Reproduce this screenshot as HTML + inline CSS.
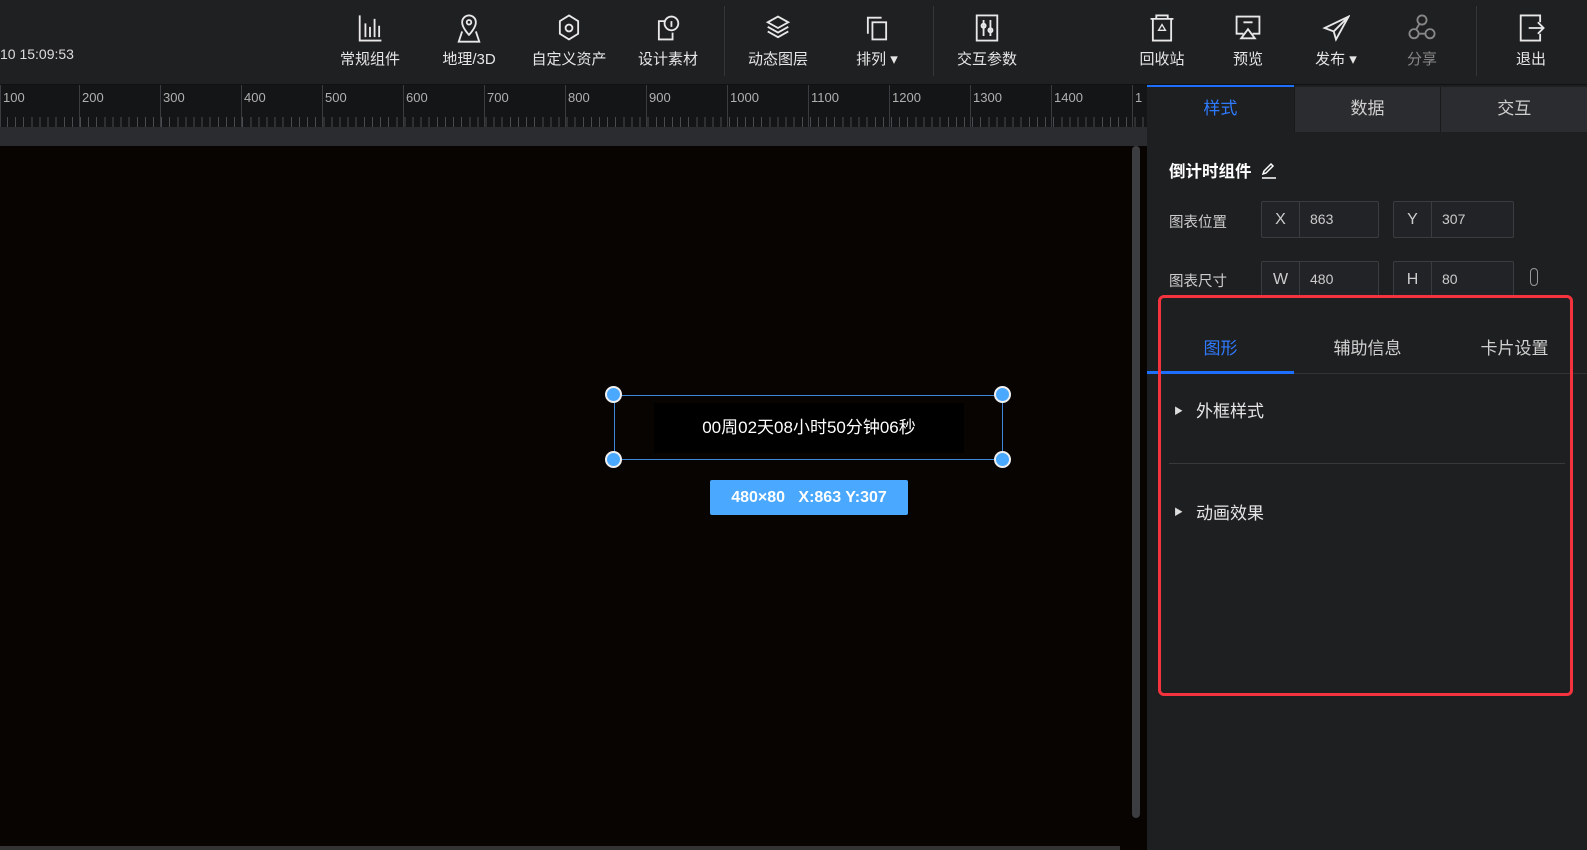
<!DOCTYPE html>
<html><head><meta charset="utf-8"><style>
*{margin:0;padding:0;box-sizing:border-box}
body{width:1587px;height:850px;overflow:hidden;background:#080402;font-family:"Liberation Sans","Noto Sans CJK SC",sans-serif;color:#ddd;position:relative}
.abs{position:absolute}
#hdr{left:0;top:0;width:1587px;height:85px;background:#1f2022;border-bottom:1px solid #111}
.tb{position:absolute;top:0;height:85px;width:90px;margin-left:-45px;text-align:center}
.tb svg{position:absolute;left:31px;top:12px;width:28px;height:32px}
.tb span{position:absolute;left:0;right:0;top:48px;font-size:15px;color:#e6e6e6;white-space:nowrap}
.sep{position:absolute;top:6px;width:1px;height:70px;background:#34363a}
#ruler{left:0;top:85px;width:1147px;height:42px;background:#141517}
#ticks{left:0;top:117px;width:1147px;height:10px;background:repeating-linear-gradient(90deg,transparent 0,transparent 7px,#4a4b4e 7px,#4a4b4e 8px,transparent 8px,transparent 8.11px)}
.rl{position:absolute;top:0;width:1px;height:42px;background:#3a3c40}
.rt{position:absolute;top:5px;font-size:13px;color:#b0b0b0}
#strip{left:0;top:127px;width:1147px;height:19px;background:#2a2c2f}
#panel{left:1147px;top:85px;width:440px;height:765px;background:#1e1f20}
.tab{position:absolute;top:2px;height:45px;width:146.7px;text-align:center;line-height:44px;font-size:17px;color:#cfcfcf;background:#2b2c2f}
.inp{position:absolute;height:37px;border:1px solid #3a3c40;background:#222326;border-radius:2px;font-size:14px}
.inp b{position:absolute;left:0;top:0;width:38px;height:35px;border-right:1px solid #3a3c40;font-weight:normal;text-align:center;line-height:35px;font-size:16px;color:#ccc}
.inp i{position:absolute;left:48px;top:0;line-height:35px;font-style:normal;color:#ccc}
.lbl{position:absolute;font-size:14.5px;color:#ccc}
.h{position:absolute;width:17px;height:17px;border-radius:50%;background:#4aa8ff;border:2px solid #f0f0f0}
</style></head><body>
<div id="hdr" class="abs">
<div class="abs" style="left:0;top:46px;font-size:14px;color:#ddd">10 15:09:53</div>

<div class="tb" style="left:370px"><svg viewBox="0 0 24 28" fill="none" stroke="#e8e8e8" stroke-width="1.6"><path d="M3 3v22h19M8 10v12M12 13v9M16 6v16M20 12v10"/></svg><span>常规组件</span></div>
<div class="tb" style="left:469px"><svg viewBox="0 0 24 28" fill="none" stroke="#e8e8e8" stroke-width="1.6"><path d="M12 20s-6-6-6-11a6 6 0 0 1 12 0c0 5-6 11-6 11z"/><circle cx="12" cy="9" r="2"/><path d="M6 17l-3 9h18l-3-9"/></svg><span>地理/3D</span></div>
<div class="tb" style="left:569px"><svg viewBox="0 0 24 28" fill="none" stroke="#e8e8e8" stroke-width="1.6"><path d="M12 3l8 5v11l-8 5-8-5V8z"/><circle cx="12" cy="14" r="3"/></svg><span>自定义资产</span></div>
<div class="tb" style="left:668px"><svg viewBox="0 0 24 28" fill="none" stroke="#e8e8e8" stroke-width="1.6"><path d="M10 8H4v16h12v-6"/><circle cx="15" cy="10" r="6"/><path d="M15 8v5"/></svg><span>设计素材</span></div>
<div class="sep" style="left:724px"></div>
<div class="tb" style="left:778px"><svg viewBox="0 0 24 28" fill="none" stroke="#e8e8e8" stroke-width="1.6"><path d="M12 4l9 5-9 5-9-5z"/><path d="M3 13l9 5 9-5M3 17l9 5 9-5"/></svg><span>动态图层</span></div>
<div class="tb" style="left:877px"><svg viewBox="0 0 24 28" fill="none" stroke="#e8e8e8" stroke-width="1.6"><path d="M4 19V5h12"/><rect x="8" y="9" width="12" height="15"/></svg><span>排列 ▾</span></div>
<div class="sep" style="left:933px"></div>
<div class="tb" style="left:987px"><svg viewBox="0 0 24 28" fill="none" stroke="#e8e8e8" stroke-width="1.6"><rect x="3" y="3" width="18" height="22"/><path d="M9 7v14M15 7v14"/><circle cx="9" cy="12" r="1.8"/><circle cx="15" cy="16" r="1.8"/></svg><span>交互参数</span></div>

<div class="tb" style="left:1162px"><svg viewBox="0 0 24 28" fill="none" stroke="#e8e8e8" stroke-width="1.6"><path d="M2 6h20M7 6V3h10v3M4 6v19h16V6"/><path d="M12 11l-3 5h6z" stroke-width="1.2"/></svg><span>回收站</span></div>
<div class="tb" style="left:1248px"><svg viewBox="0 0 24 28" fill="none" stroke="#e8e8e8" stroke-width="1.6"><path d="M8 19H2V4h20v15h-6"/><path d="M8 9h8M12 15l-6 8h12z"/></svg><span>预览</span></div>
<div class="tb" style="left:1336px"><svg viewBox="0 0 24 28" fill="none" stroke="#e8e8e8" stroke-width="1.6"><path d="M23 4L2 14l8 3 2 7zM10 17l13-13"/></svg><span>发布 ▾</span></div>
<div class="tb" style="left:1422px"><svg viewBox="0 0 24 28" fill="none" stroke="#888" stroke-width="1.6"><circle cx="12" cy="7" r="4"/><circle cx="5" cy="19" r="4"/><circle cx="19" cy="19" r="4"/><path d="M9 19h6M10 10l-3 5"/></svg><span style="color:#888">分享</span></div>
<div class="sep" style="left:1476px"></div>
<div class="tb" style="left:1531px"><svg viewBox="0 0 24 28" fill="none" stroke="#e8e8e8" stroke-width="1.6"><path d="M20 9V3H3v22h17v-6"/><path d="M10 14h13M18 9l5 5-5 5"/></svg><span>退出</span></div>
</div>

<div id="ruler" class="abs">
<div class="rl" style="left:0"></div><div class="rt" style="left:3px">100</div>
<div class="rl" style="left:79px"></div><div class="rt" style="left:82px">200</div>
<div class="rl" style="left:160px"></div><div class="rt" style="left:163px">300</div>
<div class="rl" style="left:241px"></div><div class="rt" style="left:244px">400</div>
<div class="rl" style="left:322px"></div><div class="rt" style="left:325px">500</div>
<div class="rl" style="left:403px"></div><div class="rt" style="left:406px">600</div>
<div class="rl" style="left:484px"></div><div class="rt" style="left:487px">700</div>
<div class="rl" style="left:565px"></div><div class="rt" style="left:568px">800</div>
<div class="rl" style="left:646px"></div><div class="rt" style="left:649px">900</div>
<div class="rl" style="left:727px"></div><div class="rt" style="left:730px">1000</div>
<div class="rl" style="left:808px"></div><div class="rt" style="left:811px">1100</div>
<div class="rl" style="left:889px"></div><div class="rt" style="left:892px">1200</div>
<div class="rl" style="left:970px"></div><div class="rt" style="left:973px">1300</div>
<div class="rl" style="left:1051px"></div><div class="rt" style="left:1054px">1400</div>
<div class="rl" style="left:1132px"></div><div class="rt" style="left:1135px">1</div>
</div>
<div id="ticks" class="abs"></div>
<div id="strip" class="abs"></div>

<div class="abs" style="left:1132px;top:146px;width:8px;height:672px;background:#3c3d40;border-radius:4px"></div>
<div class="abs" style="left:0;top:846px;width:1120px;height:4px;background:#333"></div>

<!-- component -->
<div class="abs" style="left:614px;top:395px;width:389px;height:65px;border:1.5px solid #3d86d8"></div>
<div class="abs" style="left:654px;top:403px;width:310px;height:50px;background:#000;color:#fff;font-size:17px;text-align:center;line-height:50px">00周02天08小时50分钟06秒</div>
<div class="h" style="left:605px;top:386px"></div><div class="h" style="left:994px;top:386px"></div>
<div class="h" style="left:605px;top:451px"></div><div class="h" style="left:994px;top:451px"></div>
<div class="abs" style="left:710px;top:480px;width:198px;height:35px;background:#4aa8ff;color:#fff;font-weight:bold;font-size:16px;line-height:35px;text-align:center;border-radius:2px">480×80 &nbsp; X:863 Y:307</div>

<div id="panel" class="abs">
<div class="abs" style="left:0;top:0;width:147px;height:3px;background:#1f6fff"></div>
<div class="tab" style="left:0;background:#1e1f20;color:#2f7bff">样式</div>
<div class="tab" style="left:146.7px;border-left:1px solid #1a1a1a">数据</div>
<div class="tab" style="left:293.4px;border-left:1px solid #1a1a1a">交互</div>
<div class="abs" style="left:22px;top:73px;font-size:16.5px;font-weight:bold;color:#fff">倒计时组件 <svg width="18" height="18" viewBox="0 0 18 18" style="vertical-align:-2px;margin-left:4px" fill="none" stroke="#fff" stroke-width="1.5"><path d="M3 13l1-3 7-7 2 2-7 7zM2 17h14"/></svg></div>
<div class="lbl" style="left:22px;top:126px">图表位置</div>
<div class="inp" style="left:114px;top:116px;width:118px"><b>X</b><i>863</i></div>
<div class="inp" style="left:246px;top:116px;width:121px"><b>Y</b><i>307</i></div>
<div class="lbl" style="left:22px;top:185px">图表尺寸</div>
<div class="inp" style="left:114px;top:176px;width:118px"><b>W</b><i>480</i></div>
<div class="inp" style="left:246px;top:176px;width:121px"><b>H</b><i>80</i></div>
<div class="abs" style="left:383px;top:183px;width:8px;height:18px;border:1.5px solid #999;border-radius:4px"></div>
<div class="abs" style="left:0;top:288px;width:440px;height:1px;background:#333"></div>
<div class="abs" style="left:0;top:286px;width:147px;height:3px;background:#1f6fff"></div>
<div class="abs" style="left:0;top:249px;width:147px;text-align:center;font-size:17px;color:#2f7bff">图形</div>
<div class="abs" style="left:147px;top:249px;width:147px;text-align:center;font-size:17px;color:#d0d0d0">辅助信息</div>
<div class="abs" style="left:294px;top:249px;width:147px;text-align:center;font-size:17px;color:#d0d0d0">卡片设置</div>
<div class="abs" style="left:27px;top:319px;font-size:9px;color:#ddd">▶</div>
<div class="abs" style="left:49px;top:312px;font-size:17px;color:#e6e6e6">外框样式</div>
<div class="abs" style="left:22px;top:378px;width:396px;height:1px;background:#38393c"></div>
<div class="abs" style="left:27px;top:420px;font-size:9px;color:#ddd">▶</div>
<div class="abs" style="left:49px;top:414px;font-size:17px;color:#e6e6e6">动画效果</div>
</div>
<div class="abs" style="left:1158px;top:295px;width:415px;height:401px;border:3px solid #f5333f;border-radius:6px"></div>
</body></html>
